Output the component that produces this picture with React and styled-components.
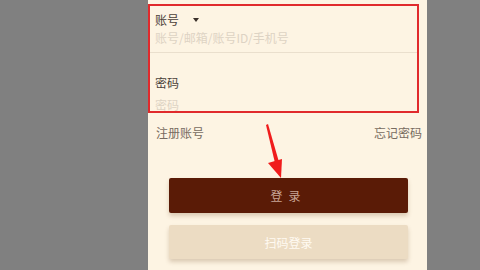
import React from 'react';
import styled, { createGlobalStyle } from 'styled-components';

const GlobalStyle = createGlobalStyle`
  html, body {
    margin: 0;
    padding: 0;
    background: #808080;
    font-family: "Noto Sans CJK SC", "Noto Sans", sans-serif;
  }
`;

const Page = styled.div`
  width: 480px;
  height: 270px;
  display: flex;
  justify-content: flex-start;
  overflow: hidden;
  padding-left: 148px;
  box-sizing: border-box;
`;

const Screen = styled.div`
  position: relative;
  width: 279px;
  height: 270px;
  background: #fdf4e3;
  padding-top: 4px;
  box-sizing: border-box;
  display: flex;
  flex-direction: column;
`;

const Highlight = styled.div`
  width: 271px;
  height: 109px;
  border: 2.5px solid #e02a2c;
  box-sizing: border-box;
  display: flex;
  flex-direction: column;
`;

const Field = styled.div`
  display: flex;
  flex-direction: column;
  padding: ${p => p.$first ? '6px 0 7px 5px' : '22px 0 0 5px'};
  border-bottom: ${p => p.$first ? '1px solid #eadfcd' : 'none'};
`;

const Label = styled.div`
  display: flex;
  align-items: center;
  gap: 14px;
  font-size: 12px;
  line-height: 16px;
  color: #4a4038;
`;

const Caret = styled.span`
  width: 0;
  height: 0;
  border-left: 3px solid transparent;
  border-right: 3px solid transparent;
  border-top: 4px solid #3a302a;
`;

const Placeholder = styled.div`
  margin-top: ${p => p.$gap}px;
  font-size: 12px;
  line-height: 14px;
  color: #ddd3c4;
`;

const Links = styled.div`
  display: flex;
  justify-content: space-between;
  padding: 12px 5px 0 8px;
  font-size: 12px;
  line-height: 16px;
  color: #776b60;
`;

const Button = styled.div`
  margin: ${p => p.$top}px 19px 0 21px;
  height: ${p => p.$h}px;
  display: flex;
  align-items: center;
  justify-content: center;
  border-radius: 2px;
  font-size: 12px;
  letter-spacing: ${p => p.$spread ? '6px' : '0'};
  background: ${p => p.$dark ? '#5a1b06' : '#ecdcc3'};
  color: ${p => p.$dark ? '#c9a596' : '#fffaf2'};
  box-shadow: 0 3px 4px rgba(120, 80, 40, 0.25);
`;

const Arrow = styled.svg`
  position: absolute;
  left: 110px;
  top: 120px;
`;

export default function App() {
  return (
    <>
      <GlobalStyle />
      <Page>
        <Screen>
          <Highlight>
            <Field $first>
              <Label>账号<Caret /></Label>
              <Placeholder $gap={3}>账号/邮箱/账号ID/手机号</Placeholder>
            </Field>
            <Field>
              <Label>密码</Label>
              <Placeholder $gap={7}>密码</Placeholder>
            </Field>
          </Highlight>
          <Links>
            <span>注册账号</span>
            <span>忘记密码</span>
          </Links>
          <Button $dark $spread $top={37} $h={35}>登录</Button>
          <Button $top={12} $h={34}>扫码登录</Button>
          <Arrow width="30" height="62" viewBox="0 0 30 62">
            <path d="M8 5 L17 43 L21 42 L10 4 Z" fill="#f01c1c" />
            <path d="M10 43 L24 39 L23 58 Z" fill="#f01c1c" />
          </Arrow>
        </Screen>
      </Page>
    </>
  );
}
